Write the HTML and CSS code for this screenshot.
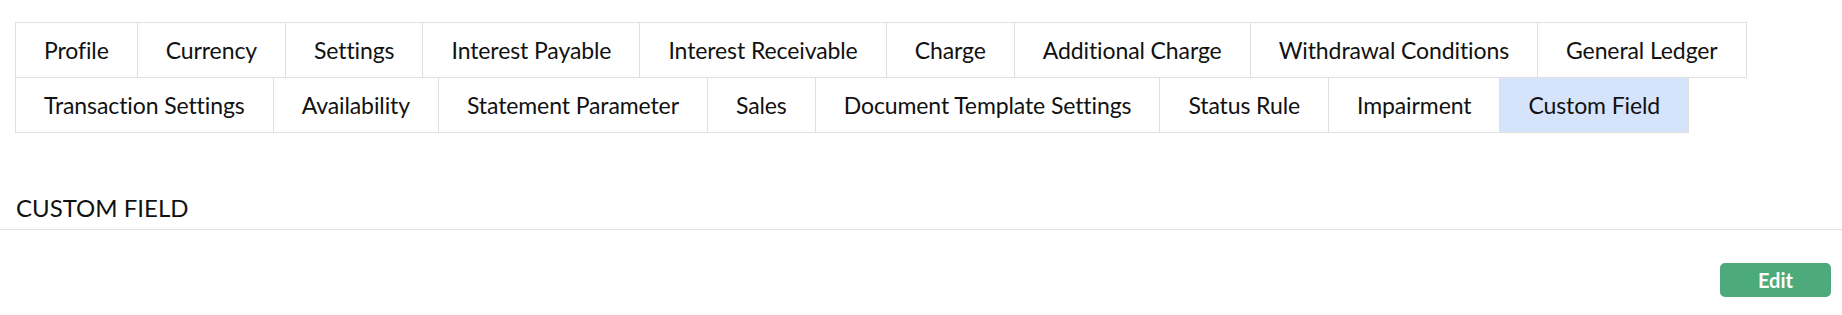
FILE: index.html
```html
<!DOCTYPE html>
<html lang="en">
<head>
    <meta charset="UTF-8">
    <meta name="viewport" content="width=device-width, initial-scale=1.0">
    <title>Product Setup - Custom Field</title>
    <link rel="stylesheet" href="styles.css">
</head>
<body>

    <!-- Product setup tabs -->
    <div class="tab-wrap">
        <ul class="tabs">
            <li><a href="#">Profile</a></li>
            <li><a href="#">Currency</a></li>
            <li><a href="#">Settings</a></li>
            <li><a href="#">Interest Payable</a></li>
            <li><a href="#">Interest Receivable</a></li>
            <li><a href="#">Charge</a></li>
            <li><a href="#">Additional Charge</a></li>
            <li><a href="#">Withdrawal Conditions</a></li>
            <li><a href="#">General Ledger</a></li>
            <li><a href="#">Transaction Settings</a></li>
            <li><a href="#">Availability</a></li>
            <li><a href="#">Statement Parameter</a></li>
            <li><a href="#">Sales</a></li>
            <li><a href="#">Document Template Settings</a></li>
            <li><a href="#">Status Rule</a></li>
            <li><a href="#">Impairment</a></li>
            <li class="active"><a href="#">Custom Field</a></li>
        </ul>
    </div>

    <section class="panel">
        <h2 class="panel-title">Custom Field</h2>
        <div class="panel-actions">
            <button class="btn-edit">Edit</button>
        </div>
    </section>

</body>
</html>
```

FILE: styles.css
```css
/* Global Styles */
body {
    font-family: Lato, "Open Sans", sans-serif;
    margin: 0;
    padding: 0;
    background-color: #fff;
    color: #111;
}

/* Tabs */
.tab-wrap {
    padding: 22px 15px 0;
}

.tabs {
    display: flex;
    flex-wrap: wrap;
    list-style: none;
    margin: 0;
    padding: 0;
}

.tabs li {
    border: 1px solid #e0e0e0;
    margin: 0 -1px -1px 0;
    background-color: #fff;
}

.tabs li a {
    display: block;
    padding: 13px 28px 13px;
    font-size: 23px;
    line-height: 28px;
    letter-spacing: -0.1px;
    color: #111;
    text-decoration: none;
}

.tabs li.active {
    background-color: #d6e4fb;
}

/* Panel */
.panel {
    margin-top: 61px;
}

.panel-title {
    margin: 0;
    padding: 0 16px 6px;
    font-size: 24px;
    font-weight: normal;
    line-height: 30px;
    text-transform: uppercase;
    color: #111;
    border-bottom: 1px solid #e0e0e0;
}

.panel-actions {
    display: flex;
    justify-content: flex-end;
    padding: 33px 11px 0;
}

.btn-edit {
    width: 111px;
    height: 34px;
    padding: 0;
    background-color: #4caa7b;
    color: #fff;
    border: none;
    border-radius: 5px;
    font-family: Lato, sans-serif;
    font-size: 20px;
    font-weight: bold;
    cursor: pointer;
}

.btn-edit:hover {
    background-color: #3f9469;
}
```
